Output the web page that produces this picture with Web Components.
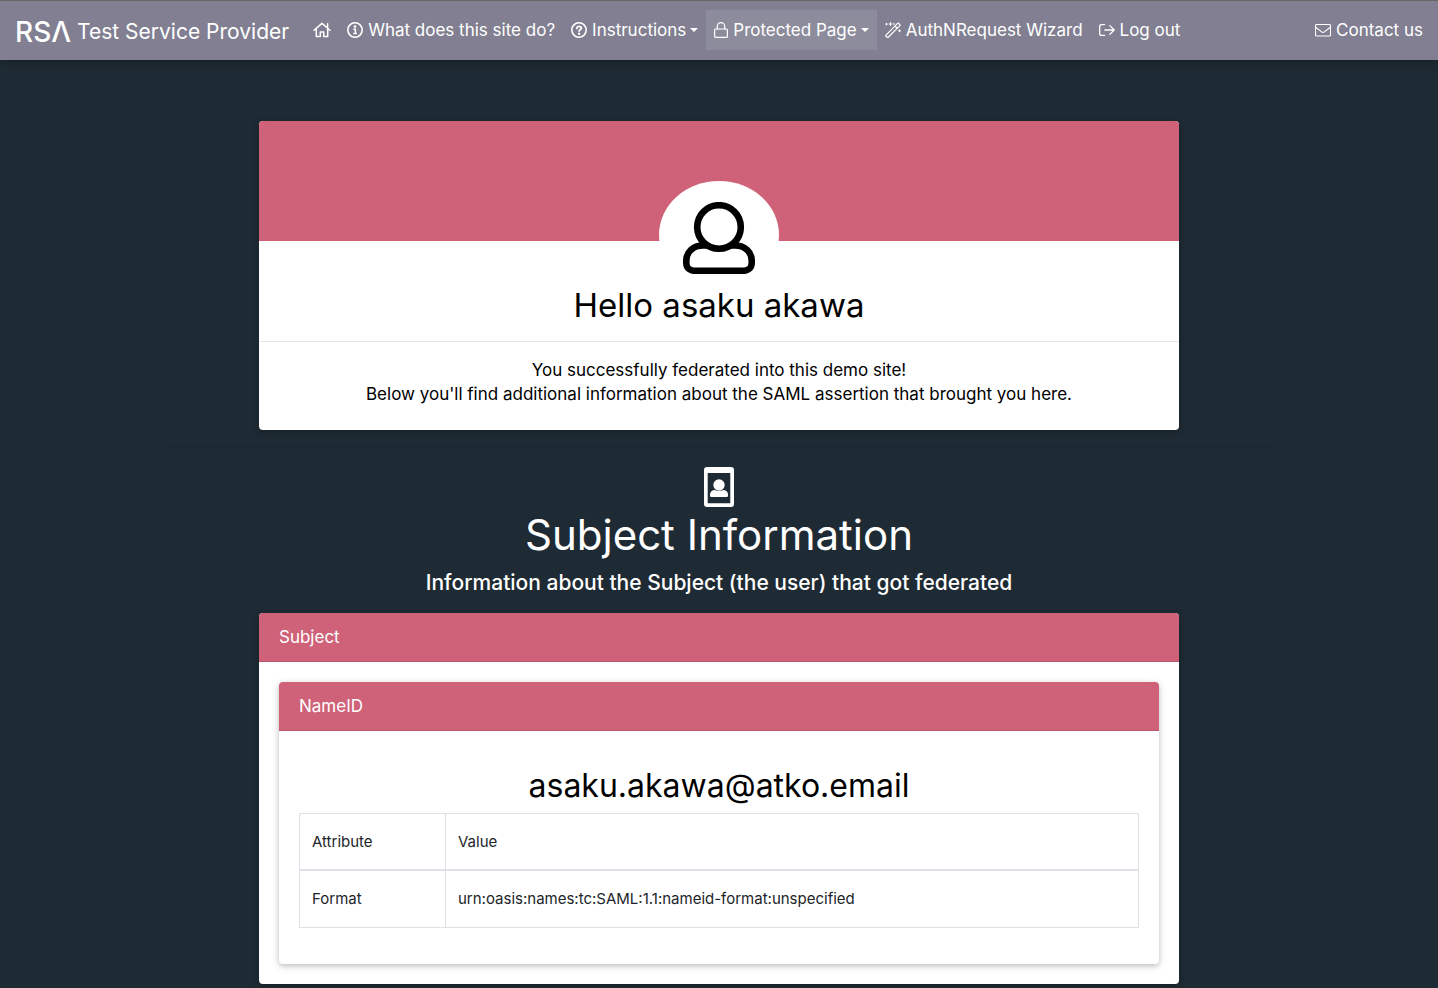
<!DOCTYPE html>
<html lang="en">
<head>
<meta charset="utf-8">
<meta name="viewport" content="width=device-width, initial-scale=1">
<title>RSA Test Service Provider</title>
<style>
  html { background: #1f2b34; }
  body {
    margin: 0;
    font: 400 17px/24px Inter, "Noto Sans CJK JP", sans-serif;
    color: #000;
    --pink: #cf6279;
    --shadow: 0 2px 5px rgba(0,0,0,.16), 0 2px 10px rgba(0,0,0,.12);
  }
</style>
</head>
<body>
<sp-navbar>
  <sp-nav-item icon="home" label="Home"></sp-nav-item>
  <sp-nav-item icon="info">What does this site do?</sp-nav-item>
  <sp-nav-item icon="question" menu>Instructions</sp-nav-item>
  <sp-nav-item icon="lock" menu active>Protected Page</sp-nav-item>
  <sp-nav-item icon="wand">AuthNRequest Wizard</sp-nav-item>
  <sp-nav-item icon="logout">Log out</sp-nav-item>
  <sp-nav-item slot="end" icon="mail">Contact us</sp-nav-item>
</sp-navbar>
<sp-page>
  <sp-profile>
    <span slot="name">Hello asaku akawa</span>
    You successfully federated into this demo site!<br>
    Below you'll find additional information about the SAML assertion that brought you here.
  </sp-profile>
  <sp-section>
    <span slot="title">Subject Information</span>
    <span slot="lead">Information about the Subject (the user) that got federated</span>
    <sp-card>
      <span slot="header">Subject</span>
      <sp-card>
        <span slot="header">NameID</span>
        <sp-attributes heading="asaku.akawa@atko.email" rows='[["Format","urn:oasis:names:tc:SAML:1.1:nameid-format:unspecified"]]'></sp-attributes>
      </sp-card>
    </sp-card>
  </sp-section>
</sp-page>

<script>
const svg = (w, h, body, sw = 1.4) =>
  `<svg width="${w}" height="${h}" viewBox="0 0 ${w} ${h}" fill="none" stroke="currentColor" stroke-width="${sw}" stroke-linecap="round" stroke-linejoin="round" aria-hidden="true">${body}</svg>`;

const icons = {
  home: svg(18, 16, '<path d="M1 8.2 9 1.4 17 8.2M14.6 1.8v3.8M3.3 6.6v8h4v-4.6h3.4v4.6h4v-8"/>', 1.5),
  info: svg(16, 16, '<circle cx="8" cy="8" r="7.2"/><path d="M6.4 7.200h2v4.200M6.200 11.500h3.800" stroke-linecap="butt"/><circle cx="8" cy="4.600" r="1.300" fill="currentColor" stroke="none"/>', 1.6),
  question: svg(16, 16, '<circle cx="8" cy="8" r="7.2"/><path d="M5.700 6.300C6 4.900 7 4.400 8.100 4.400c1.300 0 2.200.8 2.200 1.900 0 1.400-2.200 1.500-2.200 2.800" stroke-width="1.800"/><circle cx="8.100" cy="11.700" r="1.200" fill="currentColor" stroke="none"/>', 1.6),
  lock: svg(14, 16, '<rect x=".6" y="7" width="12.8" height="8.400" rx="1"/><path d="M3.300 7V4.400a3.700 3.700 0 0 1 7.400 0V7"/>', 1.2),
  wand: svg(16, 16, '<path d="M1 13.200 12.600 1.400q.5-.5 1 0l1.300 1.300q.5.500 0 1L3.200 15.200q-.5.500-1 0L1 14.200q-.5-.5 0-1zM10 4.200l2.200 2.200"/><path d="M1.500 1.300v1.600M.7 2.100h1.600M5.500.500v3M4 2h3M9 1.300v1.400M14.500 7.800v2M13.500 8.800h2" stroke-width="1"/>', 1.2),
  logout: svg(16, 16, '<path d="M5.600 2.600H2.600Q.7 2.600.7 4.500v7q0 1.900 1.900 1.900h3M5.800 8h9.400M10.800 3.600 15.200 8l-4.400 4.400"/>', 1.3),
  mail: svg(16, 16, '<rect x=".5" y="2.500" width="15" height="11.500" rx="1"/><path d="m1 5.500 5.600 4.400q1.400 1.200 2.800 0L15 5.500"/>', 1.1),
  user: svg(72, 72, '<circle cx="36" cy="25" r="21.800"/><path stroke-linecap="butt" d="M24 43.500H20C10 43.500 3.300 50 3.300 58.500V61c0 4.500 3.200 7.700 7.700 7.700h50c4.500 0 7.700-3.200 7.700-7.700v-2.500C68.700 50 62 43.500 52 43.500H48"/>', 6.6),
  portrait: '<svg width="30" height="40" viewBox="0 0 30 40" fill="currentColor" aria-hidden="true"><path fill-rule="evenodd" d="M3 0h24a3 3 0 0 1 3 3v34a3 3 0 0 1-3 3H3a3 3 0 0 1-3-3V3a3 3 0 0 1 3-3zm.700 6v30.300h22.600V6z"/><circle cx="15" cy="18" r="5.700"/><path d="M6 27.500c0-2.600 2-4.500 5-4.500 1.500 1.200 6.500 1.200 8 0 3 0 5 1.900 5 4.500v1.200q0 1.300-1.300 1.300H7.300Q6 30 6 28.700z"/></svg>'
};

const define = (name, render) => customElements.define(name, class extends HTMLElement {
  constructor() {
    super();
    this.attachShadow({ mode: 'open' }).innerHTML = render(this);
  }
});

define('sp-navbar', () => `
<style>
  :host { display: block; position: relative; }
  nav {
    display: flex; align-items: center; min-height: 58px; padding: 0 7px 1px 15px;
    background: #817f91; border-top: 1px solid #666; box-shadow: var(--shadow); color: #fff;
  }
  .brand {
    display: flex; align-items: center; gap: 6px; margin-right: 16px; padding-top: 4px;
    color: inherit; text-decoration: none; font-size: 21px; line-height: 32px; white-space: nowrap;
  }
  .logo { font-size: 28px; font-weight: 500; }
  .items { display: flex; flex: 1; }
</style>
<nav>
  <a class="brand" href="#"><span class="logo" aria-label="RSA">RSΛ</span><span>Test Service Provider</span></a>
  <div class="items"><slot></slot></div>
  <slot name="end"></slot>
</nav>`);

define('sp-nav-item', el => `
<style>
  :host { display: block; }
  a {
    display: flex; align-items: center; gap: 5px; min-height: 24px; padding: 8px;
    color: inherit; text-decoration: none; white-space: nowrap;
  }
  :host([active]) a { background: rgba(255,255,255,.1); }
  svg { display: block; flex: none; }
  .caret { margin-left: -1px; border: 4px solid transparent; border-top-color: currentColor; border-bottom: 0; }
</style>
<a href="#" ${el.hasAttribute('label') ? `aria-label="${el.getAttribute('label')}"` : ''}>${icons[el.getAttribute('icon')]}${el.hasAttribute('label') ? '' : '<slot></slot>'}${el.hasAttribute('menu') ? '<span class="caret"></span>' : ''}</a>`);

define('sp-page', () => `
<style>
  :host { display: block; max-width: 1110px; margin: 0 auto; padding: 61px 15px 16px; }
</style>
<main><slot></slot></main>`);

define('sp-profile', () => `
<style>
  :host { display: block; }
  article {
    max-width: 920px; margin: 0 auto; border-radius: 4px; overflow: hidden;
    background: #fff; box-shadow: var(--shadow); text-align: center;
  }
  .cover { height: 120px; background: var(--pink); }
  .avatar {
    display: grid; place-items: center; box-sizing: border-box; width: 120px; height: 108px;
    margin: -60px auto 0; padding-top: 6px; border-radius: 50%; background: #fff;
  }
  svg { display: block; }
  h2 { margin: 0; padding-bottom: 20px; font-size: 33px; line-height: 32px; font-weight: 400; }
  p { margin: 0; padding: 16px 20px 24px; border-top: 1px solid #e5e5e5; }
  hr { margin: 16px 0 0; border: 0; border-top: 1px solid rgba(0,0,0,.1); }
</style>
<article>
  <div class="cover"></div>
  <div class="avatar">${icons.user}</div>
  <h2><slot name="name"></slot></h2>
  <p><slot></slot></p>
</article>
<hr>`);

define('sp-section', () => `
<style>
  :host { display: block; max-width: 920px; margin: 0 auto; padding-top: 20px; }
  header { color: #fff; text-align: center; }
  svg { display: block; margin: 0 auto 4px; }
  h1 { margin: 0 0 8px; font-size: 42px; line-height: 48px; font-weight: 400; }
  p { margin: 0 0 14px; font-size: 21px; line-height: 32px; font-weight: 500; }
</style>
<section>
  <header>
    ${icons.portrait}
    <h1><slot name="title"></slot></h1>
    <p><slot name="lead"></slot></p>
  </header>
  <slot></slot>
</section>`);

define('sp-card', () => `
<style>
  :host { display: block; border-radius: 4px; background: #fff; box-shadow: var(--shadow); }
  header {
    padding: 12px 20px; border-radius: 4px 4px 0 0; border-bottom: 1px solid #b9586d;
    background: var(--pink); color: #fff;
  }
  div { padding: 20px; }
</style>
<header><slot name="header"></slot></header>
<div><slot></slot></div>`);

define('sp-attributes', el => `
<style>
  :host { display: block; padding: 16px 0; }
  h2 { margin: 0 0 8px; font-size: 32px; line-height: 38px; font-weight: 400; text-align: center; }
  table { width: 100%; border-collapse: collapse; color: #212529; font-size: 15px; line-height: 24px; text-align: left; }
  th, td { padding: 16px 12px; border: 1px solid #dee2e6; font-weight: 400; }
  thead th { padding-bottom: 15px; border-bottom-width: 2px; }
  th:first-child, td:first-child { width: 121px; }
</style>
<h2>${el.getAttribute('heading')}</h2>
<table>
  <thead><tr><th scope="col">Attribute</th><th scope="col">Value</th></tr></thead>
  <tbody>${JSON.parse(el.getAttribute('rows')).map(([k, v]) => `<tr><td>${k}</td><td>${v}</td></tr>`).join('')}</tbody>
</table>`);
</script>
</body>
</html>
